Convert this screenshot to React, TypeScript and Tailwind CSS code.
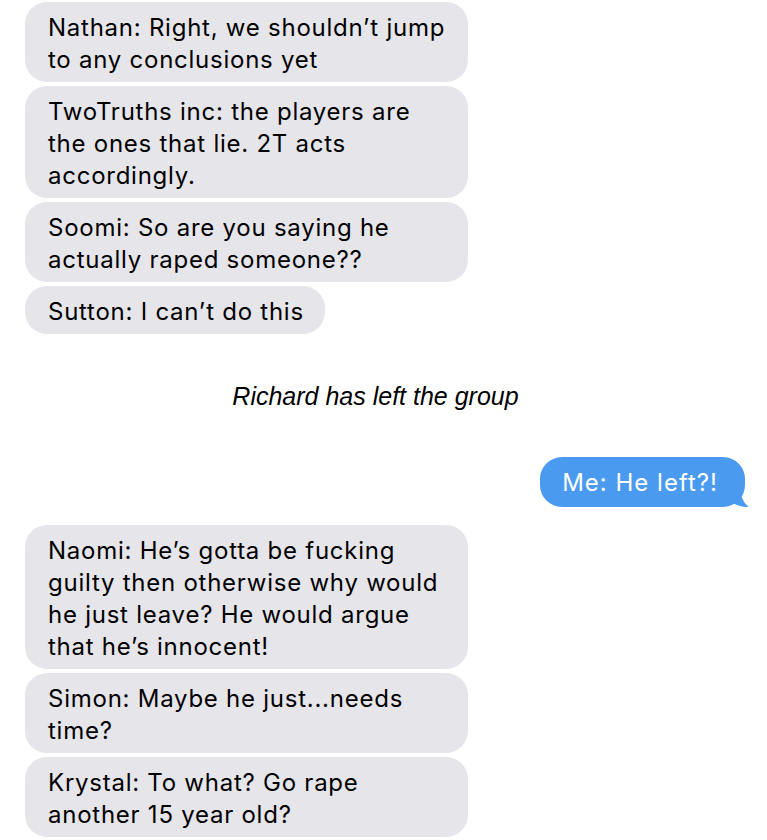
import React from "react";

const Grey = ({ lines, w }: { lines: string[]; w?: string }) => (
  <div
    className={`rounded-[22px] bg-[#e5e5ea] pl-[23px] pr-[14px] pt-[10px] pb-[6px] text-[24px] leading-[32px] tracking-[0.75px] text-black ${w ?? "w-[443px]"}`}
  >
    {lines.map((l, i) => (
      <div key={i} className="whitespace-nowrap">
        {l}
      </div>
    ))}
  </div>
);

export default function App() {
  return (
    <div
      className="w-[767px] h-[840px] bg-white overflow-hidden"
      style={{ fontFamily: "Inter, 'Noto Sans', sans-serif" }}
    >
      <div className="flex flex-col gap-[4px] pl-[25px] pt-[2px]">
        <Grey lines={["Nathan: Right, we shouldn\u2019t jump", "to any conclusions yet"]} />
        <Grey lines={["TwoTruths inc: the players are", "the ones that lie. 2T acts", "accordingly."]} />
        <Grey lines={["Soomi: So are you saying he", "actually raped someone??"]} />
        <Grey lines={["Sutton: I can\u2019t do this"]} w="w-fit pr-[21px]" />
      </div>
      <div
        className="mt-[46px] h-[32px] pr-[16px] text-center text-[25px] leading-[32px] italic text-black"
        style={{ fontFamily: "'Liberation Sans', Arial, sans-serif" }}
      >
        Richard has left the group
      </div>
      <div className="mt-[45px] flex justify-end pr-[22px]">
        <div className="relative">
          <div className="relative z-10 rounded-[22px] bg-[#4a9bf0] pl-[22px] pr-[27px] pt-[10px] pb-[8px] text-[24px] leading-[32px] tracking-[1px] text-white">
            Me: He left?!
          </div>
          <svg
            className="absolute bottom-0 right-[-4px] z-0"
            width="24"
            height="24"
            viewBox="0 0 24 24"
          >
            <path d="M4 0 L14 0 C14 10 18 20 24 24 C16 24 10 22 6 18 Z" fill="#4a9bf0" />
          </svg>
        </div>
      </div>
      <div className="mt-[18px] flex flex-col gap-[4px] pl-[25px]">
        <Grey
          lines={[
            "Naomi: He\u2019s gotta be fucking",
            "guilty then otherwise why would",
            "he just leave? He would argue",
            "that he\u2019s innocent!",
          ]}
        />
        <Grey lines={["Simon: Maybe he just...needs", "time?"]} />
        <Grey lines={["Krystal: To what? Go rape", "another 15 year old?"]} />
      </div>
    </div>
  );
}
